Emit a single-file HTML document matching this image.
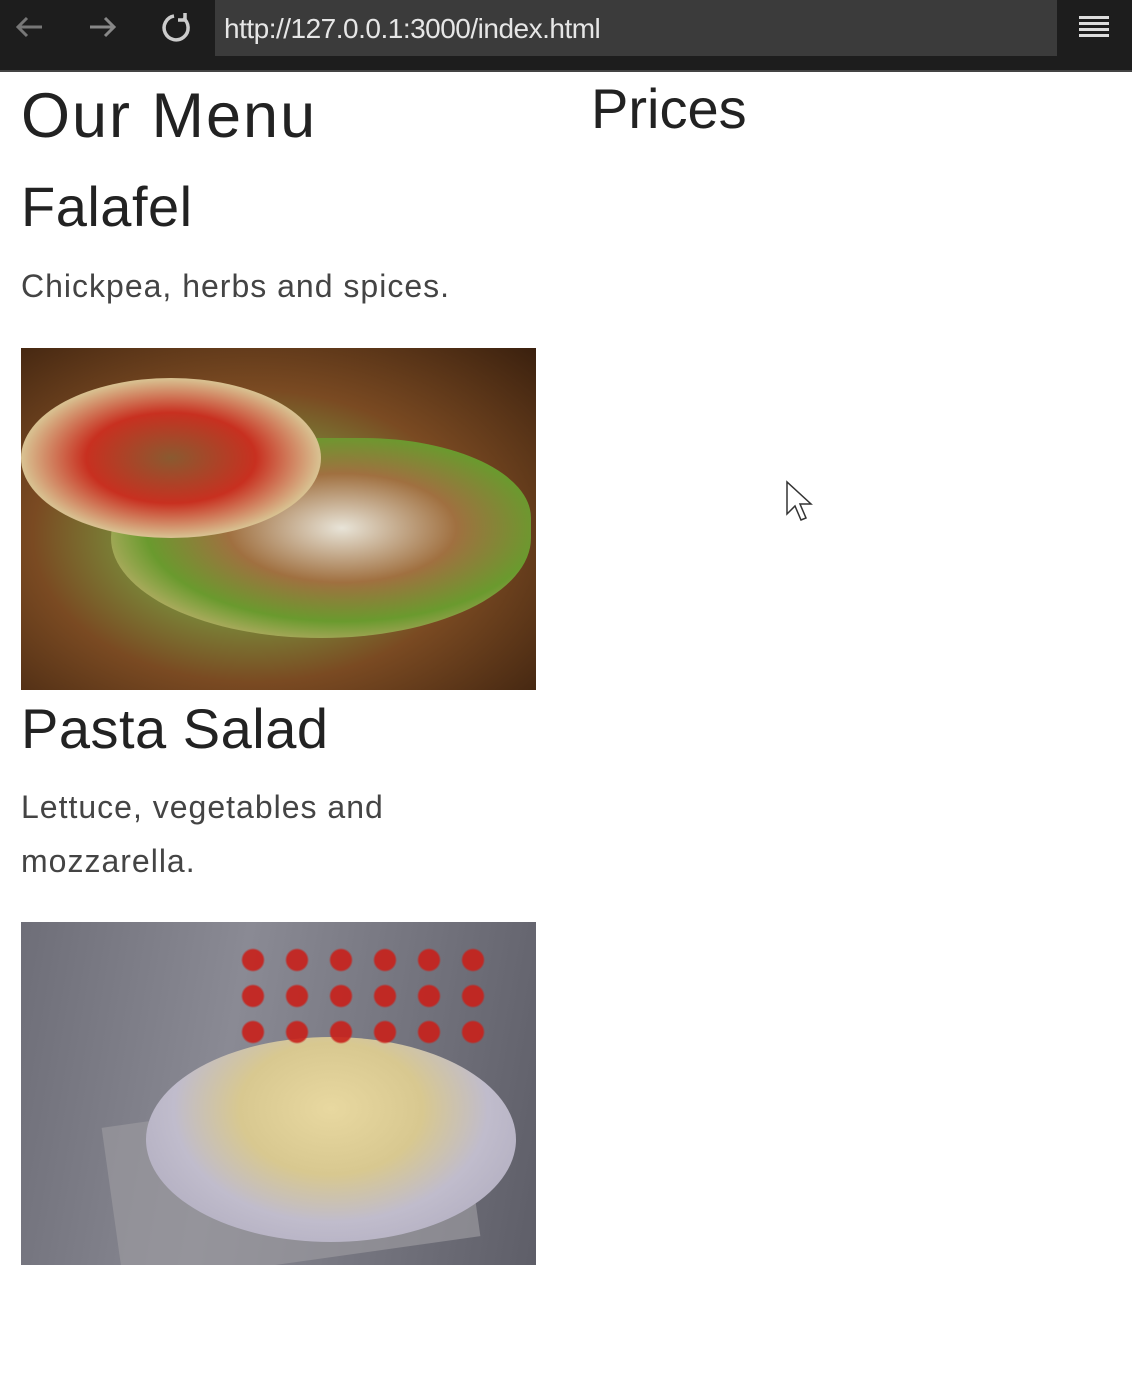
<!DOCTYPE html>
<html><head><style>
body{margin:0;width:1132px;height:1390px;background:#fff;font-family:"Liberation Sans",sans-serif;position:relative;overflow:hidden;color:#222}
.bar{position:absolute;left:0;top:0;width:1132px;height:70px;background:#1d1d1d;border-bottom:2px solid #444}
.addr{position:absolute;left:215px;top:0;width:842px;height:56px;background:#3b3b3b;color:#e6e6e6;font-size:28px;line-height:58px;padding-left:9px;box-sizing:border-box;letter-spacing:-0.5px}
.t{position:absolute;white-space:nowrap}
.img{position:absolute;left:21px;width:515px;overflow:hidden}
</style></head><body>
<div class="bar">
<svg style="position:absolute;left:12px;top:12px" width="36" height="30" viewBox="0 0 36 30"><path d="M30 15H6M15 6L6 15L15 24" stroke="#777" stroke-width="3" fill="none"/></svg>
<svg style="position:absolute;left:86px;top:12px" width="36" height="30" viewBox="0 0 36 30"><path d="M4 15H28M19 6L28 15L19 24" stroke="#888" stroke-width="3" fill="none"/></svg>
<svg style="position:absolute;left:158px;top:10px" width="36" height="36" viewBox="0 0 36 36"><path d="M25 8A12 12 0 1 1 16 6" stroke="#ccc" stroke-width="3.5" fill="none"/><path d="M27 3V10H20" stroke="#ccc" stroke-width="3.5" fill="none"/></svg>
<div class="addr">http://127.0.0.1:3000/index.html</div>
<svg style="position:absolute;left:1079px;top:14px" width="30" height="28"><g fill="#ddd"><rect y="2" width="30" height="3"/><rect y="8" width="30" height="3"/><rect y="14" width="30" height="3"/><rect y="20" width="30" height="3"/></g></svg>
</div>
<div class="t" style="left:21px;top:80px;font-size:63px;letter-spacing:2px">Our Menu</div>
<div class="t" style="left:591px;top:76px;font-size:56px">Prices</div>
<div class="t" style="left:21px;top:174px;font-size:56px;letter-spacing:0.5px">Falafel</div>
<div class="t" style="left:21px;top:268px;font-size:32px;color:#444;letter-spacing:1px">Chickpea, herbs and spices.</div>
<div class="img" style="top:348px;height:342px;background:radial-gradient(ellipse at 45% 55%,#c9b27a 0%,#7a8a3a 30%,#7a4a22 55%,#3a200e 100%)">
<div style="position:absolute;left:90px;top:90px;width:420px;height:200px;border-radius:50% 40% 50% 50%;background:radial-gradient(ellipse at 55% 45%,#e8e4d8 0%,#a07040 35%,#6a9a2e 60%,rgba(220,190,130,0.8) 80%,rgba(0,0,0,0) 100%)"></div>
<div style="position:absolute;left:0;top:30px;width:300px;height:160px;border-radius:50%;background:radial-gradient(ellipse,#8a5a30 0%,#c83020 40%,#d8c090 70%,rgba(0,0,0,0) 100%)"></div>
</div>
<div class="t" style="left:21px;top:696px;font-size:56px;letter-spacing:0.5px">Pasta Salad</div>
<div class="t" style="left:21px;top:780px;font-size:32px;color:#444;line-height:54px;white-space:normal;width:430px;letter-spacing:1px">Lettuce, vegetables and mozzarella.</div>
<div class="img" style="top:922px;height:343px;background:linear-gradient(100deg,#6e6e78,#8a8a94 40%,#5e5e68)">
<div style="position:absolute;left:90px;top:180px;width:360px;height:160px;background:#9a989e;opacity:.7;transform:rotate(-8deg)"></div>
<div style="position:absolute;left:125px;top:115px;width:370px;height:205px;border-radius:50%;background:radial-gradient(ellipse at 50% 35%,#e8d8a0 0%,#d8c890 35%,#c0bccc 60%,#a8a4b8 100%)"></div>
<div style="position:absolute;left:210px;top:20px;width:260px;height:110px;background:radial-gradient(circle,#c8201a 0 10px,transparent 12px) 0 0/44px 36px;opacity:.9"></div>
</div>
<svg style="position:absolute;left:785px;top:480px" width="30" height="42"><path d="M2 2V34L10 26L16 40L21 38L15 24H26Z" fill="#fff" stroke="#333" stroke-width="1.5"/></svg>
</body></html>
